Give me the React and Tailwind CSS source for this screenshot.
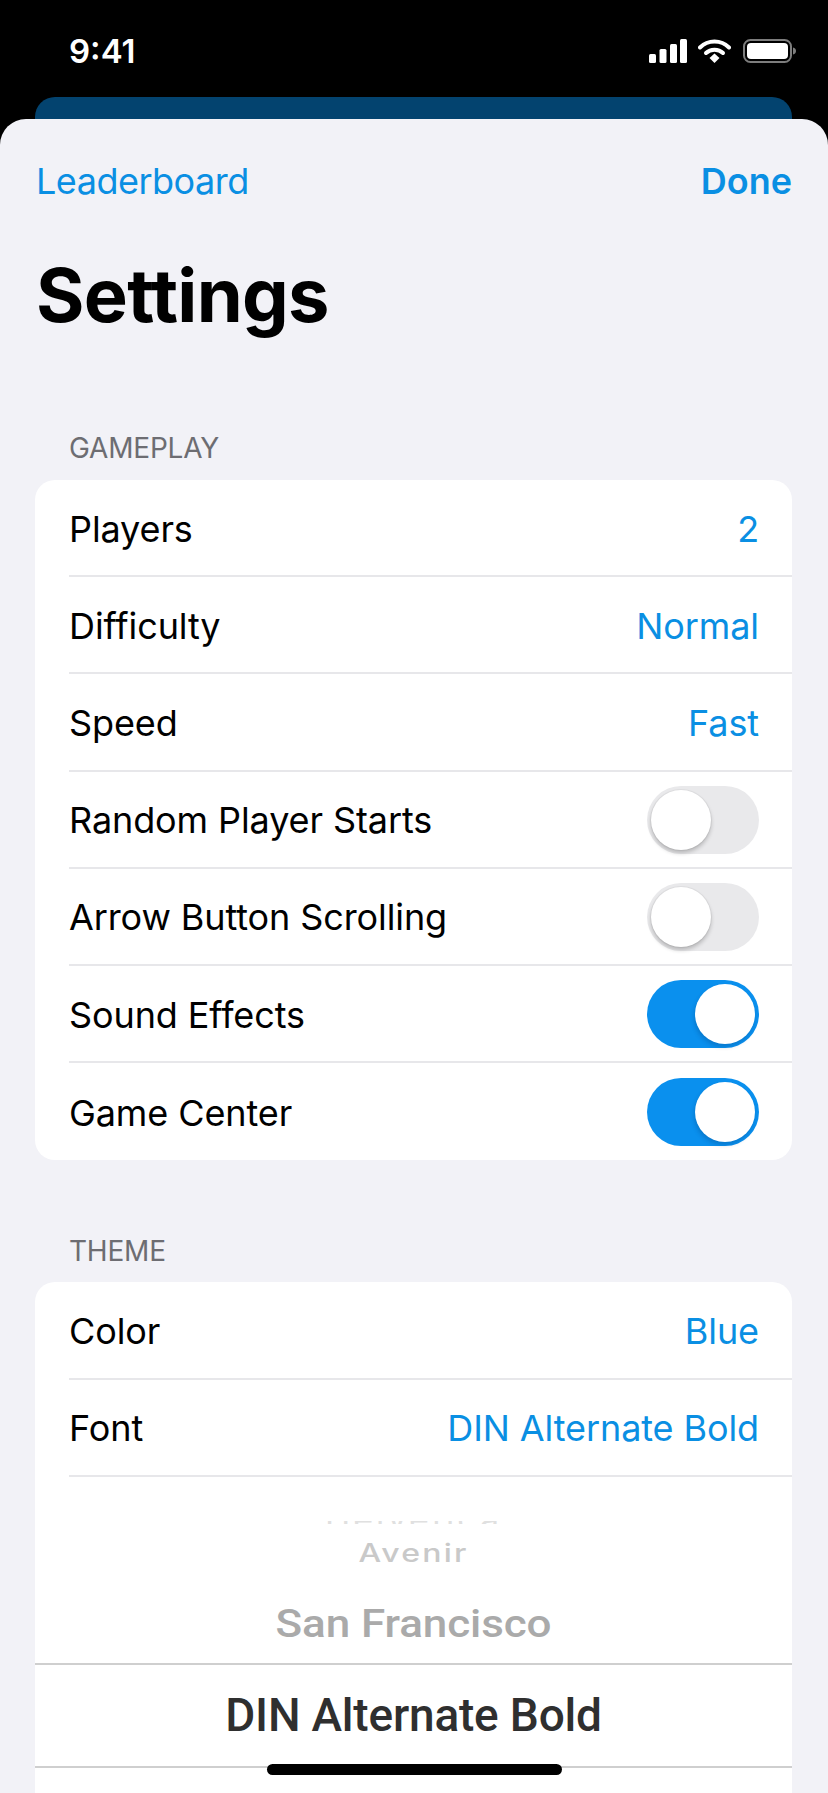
import React from "react";

const sans = "font-['Inter','Noto_Sans',sans-serif]";

const Toggle = ({ on }) => (
  <div
    className={`relative mt-[1px] h-[68px] w-[112px] rounded-full ${
      on ? "bg-[#0a90ee]" : "bg-[#e9e9eb]"
    }`}
  >
    <div
      className={`absolute top-[4px] h-[60px] w-[60px] rounded-full bg-white ${
        on
          ? "right-[4px] shadow-[-1px_3px_4px_rgba(0,40,90,0.22)]"
          : "left-[4px] shadow-[0_3px_4px_rgba(0,0,0,0.22),0_0_0_1px_rgba(0,0,0,0.04)]"
      }`}
    />
  </div>
);

const Row = ({ label, value, toggle, last }) => (
  <div className="pl-[34px]">
    <div
      className={`flex h-[97.2px] items-center justify-between pr-[33px] ${
        last ? "" : "border-b-2 border-[#e7e7ea]"
      }`}
    >
      <span className="pt-[2px] text-[36px] tracking-[-0.1px] text-black">{label}</span>
      {value && (
        <span className="pt-[2px] text-[36px] tracking-[-0.1px] text-[#0a8fe3]">
          {value}
        </span>
      )}
      {toggle !== undefined && <Toggle on={toggle} />}
    </div>
  </div>
);

const SectionTitle = ({ children }) => (
  <div className="pl-[69px] text-[28px] leading-[32px] tracking-[-0.2px] text-[#6d6d72]">
    {children}
  </div>
);

const StatusIcons = () => (
  <div className="flex items-center">
    <svg width="38" height="24" viewBox="0 0 38 24" fill="#fff">
      <rect x="0" y="15" width="7" height="9" rx="1.5" />
      <rect x="10.5" y="10" width="7" height="14" rx="1.5" />
      <rect x="21" y="5" width="7" height="19" rx="1.5" />
      <rect x="31" y="0" width="7" height="24" rx="1.5" />
    </svg>
    <svg className="ml-[11px]" width="33" height="24" viewBox="0 0 33 24" fill="none">
      <path d="M2 8.5 C10 0.5 23 0.5 31 8.5" stroke="#fff" strokeWidth="4" strokeLinecap="round" />
      <path d="M8 14 C12.5 9.5 20.5 9.5 25 14" stroke="#fff" strokeWidth="4" strokeLinecap="round" />
      <path d="M11.5 19 L16.5 14.6 L21.5 19 L16.5 24 Z" fill="#fff" />
    </svg>
    <svg className="ml-[12px]" width="53" height="24" viewBox="0 0 53 24" fill="none">
      <rect x="1" y="1" width="47" height="22" rx="6.5" stroke="#7d7d7d" strokeWidth="2" />
      <rect x="4" y="4" width="41" height="16" rx="4" fill="#fff" />
      <path d="M50 8.5 C52 9 53 10.3 53 12 C53 13.7 52 15 50 15.5 Z" fill="#7d7d7d" />
    </svg>
  </div>
);

export default function App() {
  return (
    <div className={`${sans} relative h-[1793px] w-[828px] overflow-hidden bg-black`}>
      <div className="flex h-[97px] items-start justify-between pl-[69px] pr-[32px] pt-[39px]">
        <span className="text-[33px] font-semibold leading-[24px] text-white">
          9:41
        </span>
        <StatusIcons />
      </div>
      <div className="ml-[35px] mr-[36px] h-[22px] rounded-t-[20px] bg-[#03436f]" />

      <div className="h-[1674px] rounded-t-[26px] bg-[#f2f2f7]">
        <div className="flex items-center justify-between pl-[36px] pr-[36px] pt-[39px] text-[36px] leading-[46px] text-[#0a8fe3]">
          <span className="tracking-[-0.5px]">Leaderboard</span>
          <span className="font-semibold">Done</span>
        </div>
        <h1 className="mt-[50px] pl-[36px] text-[74px] font-bold leading-[82px] tracking-[-0.7px] text-black">
          Settings
        </h1>

        <div className="mt-[96px]">
          <SectionTitle>GAMEPLAY</SectionTitle>
        </div>
        <div className="ml-[35px] mr-[36px] mt-[16px] rounded-[20px] bg-white">
          <Row label="Players" value="2" />
          <Row label="Difficulty" value="Normal" />
          <Row label="Speed" value="Fast" />
          <Row label="Random Player Starts" toggle={false} />
          <Row label="Arrow Button Scrolling" toggle={false} />
          <Row label="Sound Effects" toggle={true} />
          <Row label="Game Center" toggle={true} last />
        </div>

        <div className="mt-[75px]">
          <SectionTitle>THEME</SectionTitle>
        </div>
        <div className="ml-[35px] mr-[36px] mt-[15px] rounded-t-[20px] bg-white">
          <Row label="Color" value="Blue" />
          <Row label="Font" value="DIN Alternate Bold" />

          <div className="flex flex-col items-center">
            <div className="mt-[44px] h-[3px] w-[182px] overflow-hidden text-center">
              <span className="block -mt-[16px] text-[34px] leading-[28px] tracking-[3px] text-[#e0e0e0]">
                Helvetica
              </span>
            </div>
            <div className="mt-[17px] flex h-[24px] items-center text-[32px] font-medium tracking-[2.2px] text-[#c9c9c9] scale-y-[0.78]">
              Avenir
            </div>
            <div className="mt-[38px] flex h-[42px] items-center text-[44px] font-medium tracking-[-0.1px] text-[#aaaaaa] scale-y-[0.87] font-['Roboto',sans-serif]">
              San Francisco
            </div>
            <div className="mt-[18px] flex h-[105px] w-full items-center justify-center border-y-2 border-[#cfcfcf] text-[46px] font-medium tracking-[-0.2px] text-[#2f2f2f] font-['Roboto',sans-serif]">
              DIN Alternate Bold
            </div>
            <div className="h-[60px]" />
          </div>
        </div>
      </div>

      <div className="absolute bottom-[18px] left-[267px] h-[11px] w-[295px] rounded-full bg-black" />
    </div>
  );
}
